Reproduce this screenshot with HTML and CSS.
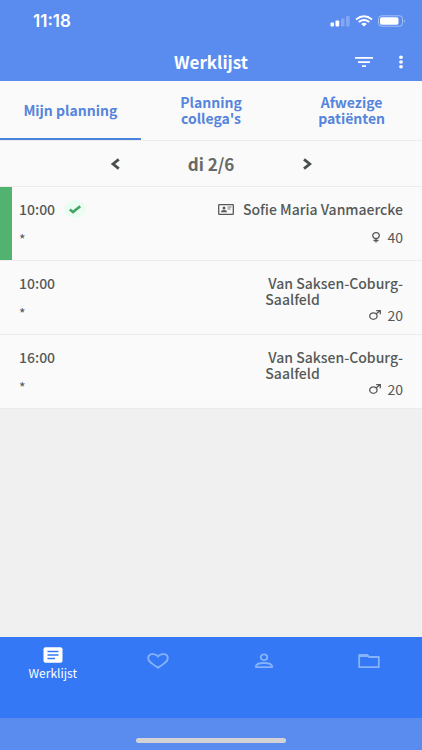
FILE: index.html
```html
<!DOCTYPE html>
<html lang="nl">
<head>
<meta charset="utf-8">
<meta name="viewport" content="width=device-width, initial-scale=1">
<title>Werklijst</title>
<link rel="stylesheet" href="styles.css">
</head>
<body>
<header class="top">
  <div class="status">
    <time class="clock">11:18</time>
    <div class="indicators">
      <svg width="20" height="12" viewBox="0 0 20 12" fill="#fff" aria-hidden="true"><rect x=".5" y="7.500" width="3.500" height="4" rx="1"/><rect x="5.500" y="5.500" width="3.700" height="6" rx="1"/><g opacity=".25"><rect x="11" y="3.500" width="3.500" height="8" rx="1"/><rect x="16" y="1" width="3.700" height="10.500" rx="1"/></g></svg>
      <svg width="18" height="12" viewBox="0 0 18 12" fill="none" stroke="#fff" stroke-width="1.900" aria-hidden="true"><path d="M1 4.500Q9-1.800 17 4.500M3.700 7.100Q9 2.700 14.300 7.100"/><path d="M6.200 8.900Q9 6.600 11.800 8.900L9 11.400z" fill="#fff" stroke="none"/></svg>
      <svg width="28" height="12" viewBox="0 0 28 12" aria-hidden="true"><rect x=".5" y=".8" width="24" height="10.400" rx="3" fill="none" stroke="#fff" stroke-opacity=".45"/><rect x="2" y="2.300" width="18.500" height="7.400" rx="1.700" fill="#fff"/><path d="M26 4.500q2 1.500 0 3z" fill="#fff" opacity=".5"/></svg>
    </div>
  </div>
  <div class="appbar">
    <h1 class="title">Werklijst</h1>
    <div class="actions">
      <button class="icon-button" type="button" aria-label="Filter"><svg width="18" height="12" viewBox="0 0 18 12" fill="#fff"><path d="M0 1h18v1.800H0zM3 5.200h12V7H3zM7 9.200h4V11H7z"/></svg></button>
      <button class="icon-button" type="button" aria-label="Meer"><svg width="6" height="14" viewBox="0 0 6 14" fill="#fff"><ellipse cx="3" cy="2.200" rx="1.900" ry="1.700"/><ellipse cx="3" cy="7" rx="1.900" ry="1.700"/><ellipse cx="3" cy="11.800" rx="1.900" ry="1.700"/></svg></button>
    </div>
  </div>
</header>
<nav class="tabs">
  <a class="tab tab-active" href="#mijn">Mijn planning</a>
  <a class="tab" href="#collegas">Planning<br>collega's</a>
  <a class="tab" href="#afwezig">Afwezige<br>patiënten</a>
</nav>
<main class="content">
  <div class="daybar">
    <button class="icon-button" type="button" aria-label="Vorige dag"><svg width="10" height="12" viewBox="0 0 10 12" fill="none" stroke="#4a4e4c" stroke-width="2.800"><path d="M8.800 1.300 3 6l5.800 4.700"/></svg></button>
    <h2 class="day">di 2/6</h2>
    <button class="icon-button" type="button" aria-label="Volgende dag"><svg width="10" height="12" viewBox="0 0 10 12" fill="none" stroke="#4a4e4c" stroke-width="2.800"><path d="M2 1.300 7.800 6 2 10.700"/></svg></button>
  </div>
  <ul class="visits">
    <li class="visit visit-done">
      <div class="when">
        <div class="line"><time>10:00</time><span class="check"><svg width="12" height="9" viewBox="0 0 12 9" fill="none" stroke="#45a567" stroke-width="2.600"><path d="M.8 4.400 4 7 11.200 1.200"/></svg></span></div>
        <div class="note">*</div>
      </div>
      <div class="who">
        <div class="line"><svg width="16" height="11" viewBox="0 0 16 11" aria-hidden="true"><rect x=".7" y=".7" width="14.600" height="9.600" rx=".6" fill="none" stroke="#555957" stroke-width="1.300"/><circle cx="6" cy="3.900" r="1.500" fill="#555957"/><path d="M3 8.200q0-2.200 3-2.200t3 2.200z" fill="#555957"/><path d="M9.500 3h4M9.500 5h3" stroke="#777" stroke-width="1"/></svg><span class="name">Sofie Maria Vanmaercke</span></div>
        <div class="age"><svg width="8" height="11" viewBox="0 0 8 11" fill="none" stroke="#555957" stroke-width="1.300" aria-label="Vrouw"><ellipse cx="4" cy="3.600" rx="3.300" ry="2.900"/><path d="M4 6.500V10.500M1.500 8.500h5"/></svg>40</div>
      </div>
    </li>
    <li class="visit">
      <div class="when">
        <div class="line"><time>10:00</time></div>
        <div class="note">*</div>
      </div>
      <div class="who">
        <div class="name name-long">Van Saksen-Coburg-<br>Saalfeld</div>
        <div class="age age-tight"><svg width="12" height="10" viewBox="0 0 12 10" fill="none" stroke="#555957" stroke-width="1.300" aria-label="Man"><ellipse cx="4.400" cy="6.100" rx="3.700" ry="3.200"/><path d="m7 3.900 4-3.200M7.200.7h4.100v3.500"/></svg>20</div>
      </div>
    </li>
    <li class="visit">
      <div class="when">
        <div class="line"><time>16:00</time></div>
        <div class="note">*</div>
      </div>
      <div class="who">
        <div class="name name-long">Van Saksen-Coburg-<br>Saalfeld</div>
        <div class="age age-tight"><svg width="12" height="10" viewBox="0 0 12 10" fill="none" stroke="#555957" stroke-width="1.300" aria-label="Man"><ellipse cx="4.400" cy="6.100" rx="3.700" ry="3.200"/><path d="m7 3.900 4-3.200M7.200.7h4.100v3.500"/></svg>20</div>
      </div>
    </li>
  </ul>
</main>
<nav class="bottom">
  <a class="item item-active" href="#werklijst"><svg width="20" height="16" viewBox="0 0 20 16"><rect x=".5" y=".3" width="19" height="15.400" rx="2" fill="#fff"/><path d="M4.500 4.500h11M4.500 8h11M4.500 11.500H12" stroke="#3478f6" stroke-width="1.500"/></svg><span>Werklijst</span></a>
  <a class="item" href="#favorieten" aria-label="Favorieten"><svg width="22" height="16" viewBox="0 0 22 16" fill="none" stroke="#86b3fb" stroke-width="1.800"><path d="M11 14.800C5 10.800 1.200 8.600 1.200 5.200C1.200.6 8-.3 11 3.500C14-.3 20.800.6 20.800 5.200C20.800 8.600 17 10.800 11 14.800z"/></svg></a>
  <a class="item" href="#profiel" aria-label="Profiel"><svg width="18" height="16" viewBox="0 0 18 16" fill="none" stroke="#86b3fb" stroke-width="1.800"><ellipse cx="9" cy="4.300" rx="3.300" ry="2.900"/><path d="M1 14.200V12.800Q2 10 9 10t8 2.800v1.400z"/></svg></a>
  <a class="item" href="#dossiers" aria-label="Dossiers"><svg width="22" height="16" viewBox="0 0 22 16"><path d="M1.200 14.200V2h8l2 2h9.600v10.200z" fill="none" stroke="#86b3fb" stroke-width="1.800" stroke-linejoin="round"/><path d="M1 2h8l2 2H1z" fill="#86b3fb"/></svg></a>
</nav>
<footer class="home"><span class="handle"></span></footer>
</body>
</html>
```
FILE: styles.css
```css
* { box-sizing: border-box; }
body {
  margin: 0;
  min-height: 100vh;
  display: flex;
  flex-direction: column;
  background: #f0f0f0;
  color: #555957;
  font: 500 14px/16px "Noto Sans CJK JP", "Noto Sans", sans-serif;
}
h1, h2, ul { margin: 0; padding: 0; }
svg { display: block; flex: none; }
a { text-decoration: none; }
.top { background: #5a8bef; color: #fff; }
.status {
  height: 42px;
  padding: 0 16px 0 33px;
  display: flex;
  align-items: center;
  justify-content: space-between;
}
.clock { font: 600 17px/20px Inter, sans-serif; }
.indicators { display: flex; gap: 5px; }
.appbar {
  height: 39px;
  display: grid;
  grid-template-columns: 1fr auto 1fr;
  align-items: center;
  padding: 0 18px;
}
.title { grid-column: 2; font-size: 17px; line-height: 20px; font-weight: 700; }
.actions { display: flex; justify-content: flex-end; align-items: center; gap: 25px; }
.icon-button { border: 0; padding: 0; background: none; cursor: pointer; }
.tabs {
  display: grid;
  grid-template-columns: repeat(3, 1fr);
  background: #fafafa;
  border-bottom: 1px solid #ececec;
}
.tab {
  min-height: 59px;
  display: flex;
  align-items: center;
  justify-content: center;
  text-align: center;
  color: #5685dc;
  font-weight: 700;
  border-bottom: 2px solid transparent;
}
.tab-active { border-color: #4a83dd; }
.content { flex: 1; }
.daybar {
  display: grid;
  grid-template-columns: auto 182px auto;
  align-items: center;
  justify-content: center;
  height: 45px;
  background: #fafafa;
}
.day { font-size: 17px; line-height: 20px; font-weight: 700; text-align: center; color: #666a68; }
.visits { list-style: none; border-bottom: 1px solid #ececec; }
.visit {
  min-height: 74px;
  padding-right: 19px;
  display: flex;
  background: #fafafa;
  border-top: 1px solid #ececec;
}
.visit::before { content: ""; width: 12px; }
.visit-done::before { background: #52b26f; }
.when { flex: 1; padding: 14px 0 8px 7px; }
.who { padding: 14px 0 8px; }
.line { display: flex; align-items: center; height: 16px; gap: 9px; }
.name, .when time { font-weight: 500; }
.name-long { text-indent: 3px; }
.check {
  width: 22px;
  height: 18px;
  border-radius: 50%;
  background: #ebfcf3;
  display: grid;
  place-items: center;
}
.note { margin-top: 14px; font-weight: 400; }
.age { display: flex; justify-content: flex-end; align-items: center; gap: 7px; margin-top: 12px; font-weight: 400; }
.age-tight { margin-top: 0; gap: 6px; }
.bottom {
  display: grid;
  grid-template-columns: repeat(4, 1fr);
  height: 81px;
  background: #3478f6;
}
.item {
  display: flex;
  flex-direction: column;
  align-items: center;
  padding-top: 16px;
  color: #fff;
  font-size: 12px;
  font-weight: 400;
}
.item-active { padding-top: 10px; gap: 2px; }
.home {
  height: 32px;
  display: flex;
  justify-content: center;
  align-items: flex-end;
  padding-bottom: 7px;
  background: #5a8bef;
}
.handle { width: 150px; height: 5px; border-radius: 3px; background: #d3d3d5; }
```
